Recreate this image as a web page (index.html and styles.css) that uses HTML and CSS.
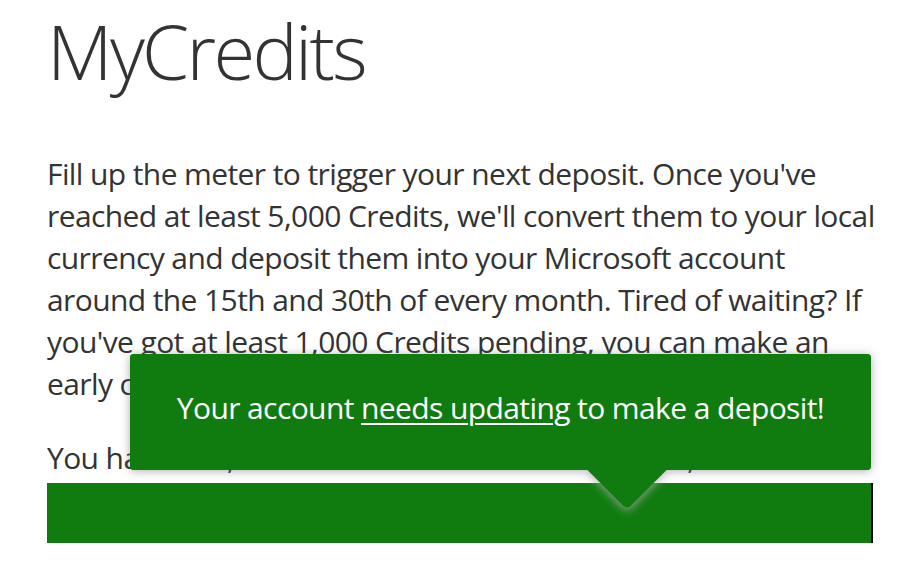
FILE: index.html
```html
<!DOCTYPE html>
<html lang="en">
<head>
<meta charset="utf-8">
<title>MyCredits</title>
<link rel="stylesheet" href="styles.css">
</head>
<body>
<main class="page">
  <h1 class="title">MyCredits</h1>
  <p class="intro">Fill up the meter to trigger your next deposit. Once you've reached at least 5,000 Credits, we'll convert them to your local currency and deposit them into your Microsoft account around the 15th and 30th of every month. Tired of waiting? If you've got at least 1,000 Credits pending, you can make an early cash out.</p>
  <p class="balance">You have 100,250 Credits and need a little more, then all set.</p>
  <div class="meter">
    <div class="tooltip">
      <span class="tooltip-text">Your account <a class="tooltip-link" href="#">needs updating</a> to make a deposit!</span>
      <span class="tooltip-arrow"></span>
    </div>
  </div>
</main>
</body>
</html>
```
FILE: styles.css
```css
html, body {
  margin: 0;
  padding: 0;
  background: #ffffff;
}
.page {
  width: 826px;
  padding: 0 33px 0 47px;
  font-family: "Open Sans", "Noto Sans", sans-serif;
  color: #333333;
}
.title {
  margin: 13px 0 0 0;
  font-size: 76px;
  line-height: 76px;
  font-weight: 300;
  letter-spacing: -2.7px;
  color: #333333;
}
.intro {
  width: 835px;
  margin: 64px 0 0 0;
  font-size: 30px;
  line-height: 42px;
  font-weight: 400;
  letter-spacing: -0.6px;
}
.balance {
  margin: 32px 0 0 0;
  font-size: 30px;
  line-height: 42px;
  letter-spacing: -0.6px;
  white-space: nowrap;
  overflow: hidden;
}
.meter {
  position: relative;
  margin-top: 4px;
  height: 60px;
  background: #107c10;
  border-right: 2px solid #000000;
  box-sizing: border-box;
}
.tooltip {
  position: absolute;
  left: 83px;
  right: 0;
  bottom: calc(100% + 13px);
  height: 116px;
  background: #107c10;
  border-radius: 4px;
  box-shadow: 0 1px 10px rgba(110, 110, 110, 0.55);
  display: flex;
  align-items: center;
  justify-content: center;
}
.tooltip-text {
  position: relative;
  z-index: 2;
  color: #ffffff;
  font-size: 30px;
  line-height: 42px;
  letter-spacing: -0.6px;
  margin-top: -8px;
}
.tooltip-link {
  color: #ffffff;
  text-decoration: underline;
  text-underline-offset: 4px;
  text-decoration-thickness: 2px;
}
.tooltip-arrow {
  position: absolute;
  left: 469px;
  bottom: -28px;
  width: 56px;
  height: 56px;
  background: #107c10;
  transform: rotate(45deg);
  border-radius: 0 0 5px 0;
  box-shadow: 2px 2px 9px rgba(170, 170, 170, 0.75);
  z-index: 0;
}
.tooltip::after {
  content: "";
  position: absolute;
  left: 0;
  right: 0;
  top: 0;
  bottom: 0;
  background: #107c10;
  border-radius: 4px;
  z-index: 1;
}
```
